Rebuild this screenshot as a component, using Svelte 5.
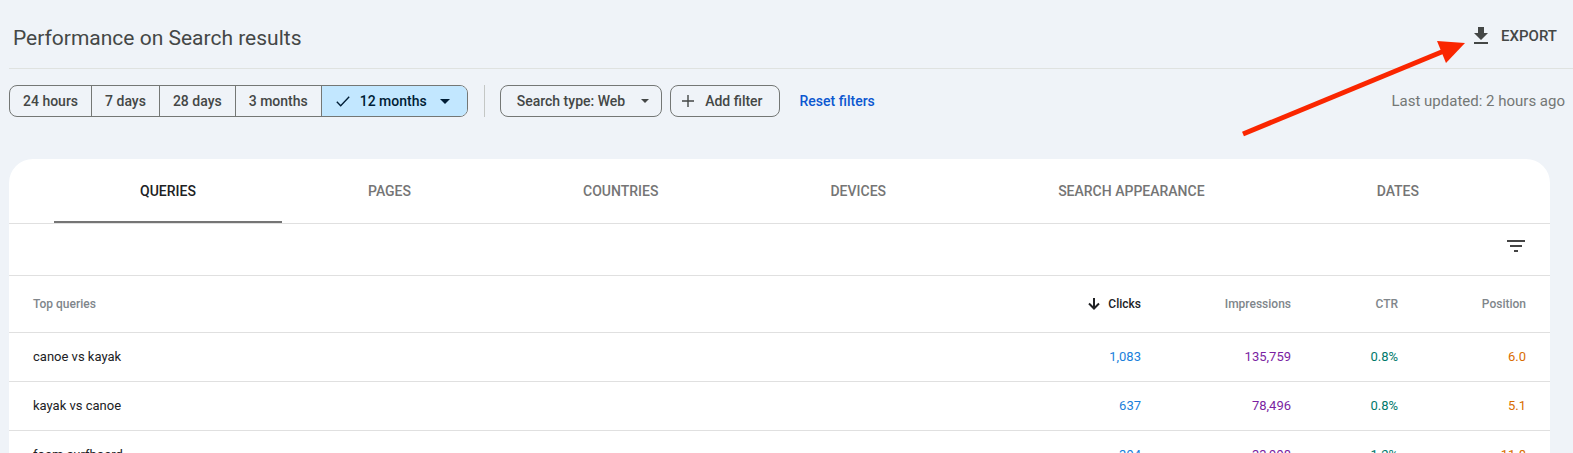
<script>
  const ranges = ['24 hours', '7 days', '28 days', '3 months'];
  const tabs = ['Queries', 'Pages', 'Countries', 'Devices', 'Search appearance', 'Dates'];
  const rows = [
    { query: 'canoe vs kayak', clicks: '1,083', impressions: '135,759', ctr: '0.8%', position: '6.0' },
    { query: 'kayak vs canoe', clicks: '637', impressions: '78,496', ctr: '0.8%', position: '5.1' },
    { query: 'foam surfboard', clicks: '394', impressions: '33,998', ctr: '1.2%', position: '11.8' }
  ];

  let activeTab = $state('Queries');
</script>

<main>
  <header>
    <h1>Performance on Search results</h1>
    <button class="export">
      <svg width="24" height="24" viewBox="0 0 24 24"><path d="M19 9h-4V3H9v6H5l7 7 7-7zM5 18v2h14v-2H5z" /></svg>
      Export
    </button>
    <svg class="arrow" width="224" height="96" viewBox="0 0 224 96">
      <path class="shaft" d="M1 93 202 10" />
      <path d="M195 0 223 2 204 22z" />
    </svg>
  </header>

  <div class="filters">
    <div class="ranges">
      {#each ranges as range}
        <button>{range}</button>
      {/each}
      <button class="selected">
        <svg width="18" height="18" viewBox="0 0 18 18"><path d="M6.700 12.700 3.300 9.300 2.300 10.300 6.700 14.700 15.700 5.200 14.700 4.200z" /></svg>
        12 months
        <svg class="caret" width="10" height="5" viewBox="0 0 10 5"><path d="M0 0h10L5 5z" /></svg>
      </button>
    </div>
    <div class="separator"></div>
    <button class="chip type">
      Search type: Web
      <svg width="8" height="4" viewBox="0 0 8 4"><path d="M0 0h8L4 4z" /></svg>
    </button>
    <button class="chip add">
      <svg width="12" height="12" viewBox="0 0 12 12"><path d="M5.300 0h1.400v5.300H12v1.400H6.700V12H5.300V6.700H0V5.300h5.300z" /></svg>
      Add filter
    </button>
    <button class="reset">Reset filters</button>
    <span class="updated">Last updated: 2 hours ago</span>
  </div>

  <section class="card">
    <div class="tabs" role="tablist">
      {#each tabs as tab}
        <button
          role="tab"
          aria-selected={activeTab === tab}
          class:active={activeTab === tab}
          onclick={() => (activeTab = tab)}
        >{tab}</button>
      {/each}
    </div>

    <div class="toolbar">
      <button aria-label="Filter rows">
        <svg width="18" height="12" viewBox="0 0 18 12"><path d="M0 0h18v2H0zM3 5h12v2H3zM7 10h4v2H7z" /></svg>
      </button>
    </div>

    <table>
      <thead>
        <tr>
          <th class="query">Top queries</th>
          <th class="clicks">
            <svg width="12" height="12" viewBox="0 0 12 12"><path d="M6 0v10M1 5.500l5 5 5-5" /></svg>Clicks
          </th>
          <th class="impressions">Impressions</th>
          <th class="ctr">CTR</th>
          <th class="position">Position</th>
        </tr>
      </thead>
      <tbody>
        {#each rows as row}
          <tr>
            <td class="query">{row.query}</td>
            <td class="clicks">{row.clicks}</td>
            <td class="impressions">{row.impressions}</td>
            <td class="ctr">{row.ctr}</td>
            <td class="position">{row.position}</td>
          </tr>
        {/each}
      </tbody>
    </table>
  </section>
</main>

<style>
  :global(body) {
    margin: 0;
    background: #eff3f8;
  }

  main {
    box-sizing: border-box;
    height: 100vh;
    overflow: hidden;
    padding-left: 9px;
    font-family: Roboto, sans-serif;
    color: #444746;
  }

  button {
    padding: 0;
    border: none;
    background: none;
    color: inherit;
    font: inherit;
    white-space: nowrap;
    cursor: pointer;
  }

  svg {
    flex: none;
    fill: currentColor;
  }

  header {
    position: relative;
    display: flex;
    align-items: center;
    justify-content: space-between;
    height: 68px;
    padding: 0 16px 0 4px;
    border-bottom: 1px solid #dfe2e0;
  }

  h1 {
    margin: 8px 0 0;
    font-size: 21px;
    font-weight: 400;
    line-height: 28px;
  }

  .export {
    display: flex;
    align-items: center;
    gap: 8px;
    margin-top: 4px;
    font-size: 15px;
    font-weight: 500;
    text-transform: uppercase;
  }

  .arrow {
    position: absolute;
    top: 41px;
    right: 107px;
    fill: #fa2600;
    pointer-events: none;
  }

  .shaft {
    stroke: #fa2600;
    stroke-width: 5;
  }

  .filters {
    display: flex;
    align-items: center;
    margin-top: 16px;
    padding-right: 8px;
    font-size: 14px;
    font-weight: 500;
  }

  .ranges {
    display: flex;
    box-sizing: border-box;
    height: 32px;
    border: 1px solid #747775;
    border-radius: 8px;
    overflow: hidden;
  }

  .ranges button {
    padding: 0 13px;
    border-right: 1px solid #747775;
  }

  .ranges .selected {
    display: flex;
    align-items: center;
    gap: 8px;
    padding: 0 17px 0 12px;
    border-right: none;
    background: #c2e7ff;
    color: #001d35;
  }

  .caret {
    margin-left: 5px;
  }

  .separator {
    width: 1px;
    height: 32px;
    margin: 0 15px 0 16px;
    background: #c4c7c5;
  }

  .chip {
    display: flex;
    align-items: center;
    box-sizing: border-box;
    height: 32px;
    margin-right: 8px;
    border: 1px solid #747775;
    border-radius: 8px;
  }

  .type {
    gap: 16px;
    padding: 0 12px 0 16px;
  }

  .add {
    gap: 11px;
    padding: 0 16px 0 11px;
  }

  .reset {
    margin-left: 12px;
    color: #0b57d0;
  }

  .updated {
    margin-left: auto;
    color: #747775;
    font-size: 15px;
    font-weight: 400;
  }

  .card {
    margin: 42px 23px 0 0;
    border-radius: 24px 24px 0 0;
    background: #fff;
    color: #202124;
    overflow: hidden;
  }

  .tabs {
    display: flex;
    height: 64px;
    padding: 0 45px;
    border-bottom: 1px solid #e0e0e0;
  }

  .tabs button {
    flex: 1 1 auto;
    border-top: 2px solid transparent;
    border-bottom: 2px solid transparent;
    color: #757575;
    font-size: 14px;
    font-weight: 500;
    text-transform: uppercase;
  }

  .tabs .active {
    border-bottom-color: #757575;
    color: #202124;
  }

  .toolbar {
    display: flex;
    justify-content: flex-end;
    height: 35px;
    padding: 16px 25px 0;
    border-bottom: 1px solid #e0e0e0;
  }

  .toolbar button {
    height: 12px;
  }

  .toolbar svg {
    display: block;
    fill: #444;
  }

  table {
    width: 100%;
    border-collapse: separate;
    border-spacing: 0;
    table-layout: fixed;
    font-size: 13px;
  }

  th,
  td {
    box-sizing: border-box;
    height: 49px;
    padding: 0 0 2px;
    border-bottom: 1px solid #e0e0e0;
    text-align: right;
  }

  th {
    height: 57px;
    padding-bottom: 0;
    color: #80868b;
    font-size: 12px;
    font-weight: 500;
  }

  .query {
    padding-left: 24px;
    text-align: left;
  }

  .clicks {
    width: 150px;
  }

  .impressions {
    width: 150px;
  }

  .ctr {
    width: 107px;
  }

  .position {
    width: 152px;
    padding-right: 24px;
  }

  /* the width of the last column includes its right padding */
  .position {
    box-sizing: border-box;
  }

  th.clicks {
    color: #202124;
  }

  th svg {
    margin-right: 8px;
    fill: none;
    stroke: currentColor;
    stroke-width: 2;
    vertical-align: -2px;
  }

  td.clicks {
    color: #1a7fdb;
  }

  td.impressions {
    color: #7b1fa2;
  }

  td.ctr {
    color: #00796b;
  }

  td.position {
    color: #d96d00;
  }
</style>
